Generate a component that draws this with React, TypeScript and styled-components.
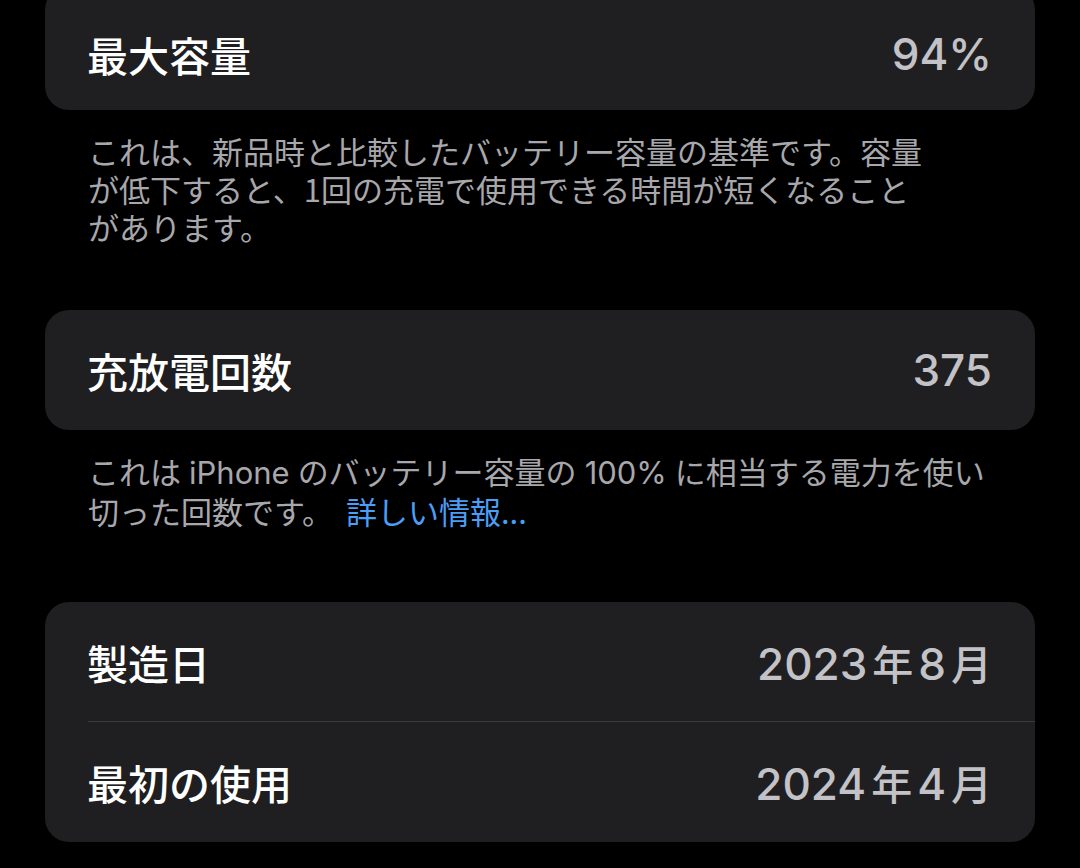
import React from "react";
import styled, { createGlobalStyle } from "styled-components";

const Global = createGlobalStyle`
  html, body {
    margin: 0;
    padding: 0;
    background: #000;
  }
  body {
    width: 1080px;
    height: 868px;
    overflow: hidden;
    font-family: "Inter", "Noto Sans CJK JP", sans-serif;
    -webkit-font-smoothing: antialiased;
  }
`;

const Page = styled.main`
  display: flex;
  flex-direction: column;
  padding: 0 45px;
  width: 1080px;
  box-sizing: border-box;
`;

const Card = styled.section<{ $bleed?: boolean }>`
  display: flex;
  flex-direction: column;
  background: #1f1f21;
  border-radius: 24px;
  margin-top: ${(p) => (p.$bleed ? "-14px" : "0")};
  padding-top: ${(p) => (p.$bleed ? "12px" : "0")};
  overflow: hidden;
`;

const Row = styled.div<{ $h?: number; $divider?: boolean }>`
  position: relative;
  display: flex;
  align-items: center;
  justify-content: space-between;
  height: ${(p) => p.$h ?? 120}px;
  padding: 0 43px 0 42px;
  box-sizing: border-box;
  ${(p) =>
    p.$divider
      ? `
  &::after {
    content: "";
    position: absolute;
    left: 43px;
    right: 0;
    bottom: 0;
    height: 1px;
    background: #3a3a3d;
  }`
      : ""}
`;

const Title = styled.span`
  font-family: "Noto Sans CJK JP", sans-serif;
  font-size: 41px;
  font-weight: 500;
  color: #ffffff;
`;

const Value = styled.span`
  display: inline-flex;
  align-items: baseline;
  font-family: "Inter", "Noto Sans CJK JP", sans-serif;
  font-size: 44px;
  font-weight: 500;
  color: #c2c2c7;
`;

const Kanji = styled.span<{ $last?: boolean }>`
  font-family: "Noto Sans CJK JP", sans-serif;
  font-size: 41px;
  margin: ${(p) => (p.$last ? "0 0 0 5px" : "0 5px")};
`;

const Footer = styled.p<{ $after: number }>`
  margin: 0 0 ${(p) => p.$after}px;
  padding: 22px 45px 0 43px;
  font-family: "Noto Sans CJK JP", sans-serif;
  font-size: 31px;
  line-height: 38px;
  font-weight: 400;
  color: #a7a7ac;
  white-space: nowrap;
`;

const Latin = styled.span`
  font-family: "Inter", sans-serif;
  margin: 0 8px;
`;

const Link = styled.a`
  color: #4b9ef6;
  text-decoration: none;
  margin-left: 13px;
`;

export default function App() {
  return (
    <>
      <Global />
      <Page>
        <Card $bleed>
          <Row $h={112}>
            <Title>最大容量</Title>
            <Value>94%</Value>
          </Row>
        </Card>
        <Footer $after={64}>
          これは、新品時と比較したバッテリー容量の基準です。容量
          <br />
          が低下すると、1回の充電で使用できる時間が短くなること
          <br />
          があります。
        </Footer>

        <Card>
          <Row>
            <Title>充放電回数</Title>
            <Value>375</Value>
          </Row>
        </Card>
        <Footer $after={72}>
          これは<Latin>iPhone</Latin>のバッテリー容量の<Latin>100%</Latin>に相当する電力を使い
          <br />
          切った回数です。<Link href="#">詳しい情報...</Link>
        </Footer>

        <Card>
          <Row $divider>
            <Title>製造日</Title>
            <Value>
              2023<Kanji>年</Kanji>8<Kanji $last>月</Kanji>
            </Value>
          </Row>
          <Row>
            <Title>最初の使用</Title>
            <Value>
              2024<Kanji>年</Kanji>4<Kanji $last>月</Kanji>
            </Value>
          </Row>
        </Card>
      </Page>
    </>
  );
}
